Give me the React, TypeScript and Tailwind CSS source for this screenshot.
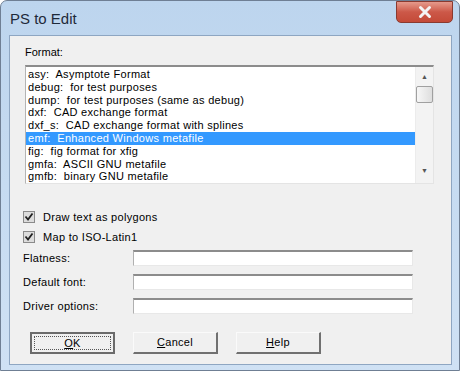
const formats = [
  "asy:  Asymptote Format",
  "debug:  for test purposes",
  "dump:  for test purposes (same as debug)",
  "dxf:  CAD exchange format",
  "dxf_s:  CAD exchange format with splines",
  "emf:  Enhanced Windows metafile",
  "fig:  fig format for xfig",
  "gmfa:  ASCII GNU metafile",
  "gmfb:  binary GNU metafile",
];

function Checkbox({ label }: { label: string }) {
  return (
    <div className="flex items-center h-[14px] gap-[8px] pl-[13px]">
      <div className="w-[12px] h-[12px] border border-[#8a8a8a] bg-[#dcdcdc] flex items-center justify-center">
        <svg width="10" height="10" viewBox="0 0 10 10">
          <path d="M1.5 4.5 L4 7.5 L8.5 1.5" stroke="#222" strokeWidth="1.8" fill="none" />
        </svg>
      </div>
      <span className="tracking-[0.3px]">{label}</span>
    </div>
  );
}

function Field({ label }: { label: string }) {
  return (
    <div className="flex items-center h-[16px] pl-[13px]">
      <span className="w-[110px] tracking-[0.3px]">{label}</span>
      <div className="w-[280px] h-[16px] bg-white border-t-2 border-t-[#8c8c8c] border-l border-l-[#b0b0b0] border-r border-r-[#e8e8e8] border-b border-b-[#e8e8e8]" />
    </div>
  );
}

function Button({ ul, rest, focus }: { ul: string; rest: string; focus?: boolean }) {
  return (
    <div
      className={
        "w-[85px] h-[22px] flex items-center justify-center bg-[#f0f0f0] " +
        (focus
          ? "border-2 border-[#6b6b6b] p-[2px]"
          : "border-r-2 border-b-2 border-r-[#707070] border-b-[#707070] border-t border-l border-t-[#fafafa] border-l-[#fafafa]")
      }
    >
      <div
        className={
          "w-full h-full flex items-center justify-center " +
          (focus ? "border border-dotted border-[#555]" : "")
        }
      >
        <span className="tracking-[0.3px]">
          <span className="underline">{ul}</span>
          {rest}
        </span>
      </div>
    </div>
  );
}

export default function App() {
  return (
    <div
      className="w-[460px] h-[371px] bg-white text-[11px] text-black"
      style={{ fontFamily: '"Liberation Sans", Arial, sans-serif' }}
    >
      <div className="w-[460px] h-[371px] rounded-t-[7px] border border-[#6f7f94] bg-gradient-to-b from-[#bdd5ee] to-[#cfe1f4] flex flex-col">
        <div className="h-[34px] flex items-start justify-between">
          <span className="text-[15px] text-[#1e2a3a] mt-[7px] ml-[9px]">PS to Edit</span>
          <div className="w-[57px] h-[22px] mr-[6px] rounded-b-[5px] border border-[#8a3a30] bg-gradient-to-b from-[#e59a8c] via-[#cc5848] to-[#c44a38] flex items-center justify-center">
            <svg width="16" height="14" viewBox="0 0 16 14">
              <path d="M3.5 2.5 L12.5 11.5 M12.5 2.5 L3.5 11.5" stroke="#f4f4f4" strokeWidth="3" strokeLinecap="round" />
            </svg>
          </div>
        </div>
        <div className="flex-1 ml-[8px] mr-[7px] mb-[5px] bg-[#f0f0f0] border border-[#8ea6c2] flex flex-col">
          <div className="pl-[15px] mt-[10px] h-[13px] leading-[13px]">Format:</div>
          <div className="ml-[15px] mt-[6px] w-[409px] h-[119px] bg-white border-t-2 border-t-[#8c8c8c] border-l border-l-[#b4b4b4] border-r border-r-[#e4e4e4] border-b border-b-[#e4e4e4] flex">
            <div className="flex-1 pt-[1px] overflow-hidden">
              {formats.map((f, i) => (
                <div
                  key={f}
                  className={
                    "h-[12.8px] leading-[12.8px] pl-[2px] whitespace-pre tracking-[0.3px] " +
                    (i === 5 ? "bg-[#3399ff] text-white" : "")
                  }
                >
                  {f}
                </div>
              ))}
            </div>
            <div className="w-[18px] bg-[#f3f3f3] border-l border-[#ececec] flex flex-col items-center">
              <span className="text-[7px] text-[#555] mt-[6px] leading-[8px]">▲</span>
              <div className="w-[17px] h-[17px] mt-[5px] border border-[#a0a0a0] rounded-[2px] bg-gradient-to-r from-[#f7f7f7] to-[#dedede]" />
              <div className="flex-1" />
              <span className="text-[7px] text-[#555] mb-[8px] leading-[8px]">▼</span>
            </div>
          </div>
          <div className="mt-[26px] flex flex-col gap-[6px]">
            <Checkbox label="Draw text as polygons" />
            <Checkbox label="Map to ISO-Latin1" />
          </div>
          <div className="mt-[6px] flex flex-col gap-[8px]">
            <Field label="Flatness:" />
            <Field label="Default font:" />
            <Field label="Driver options:" />
          </div>
          <div className="mt-[18px] pl-[20px] flex gap-[18px]">
            <Button ul="O" rest="K" focus />
            <Button ul="C" rest="ancel" />
            <Button ul="H" rest="elp" />
          </div>
        </div>
      </div>
    </div>
  );
}
